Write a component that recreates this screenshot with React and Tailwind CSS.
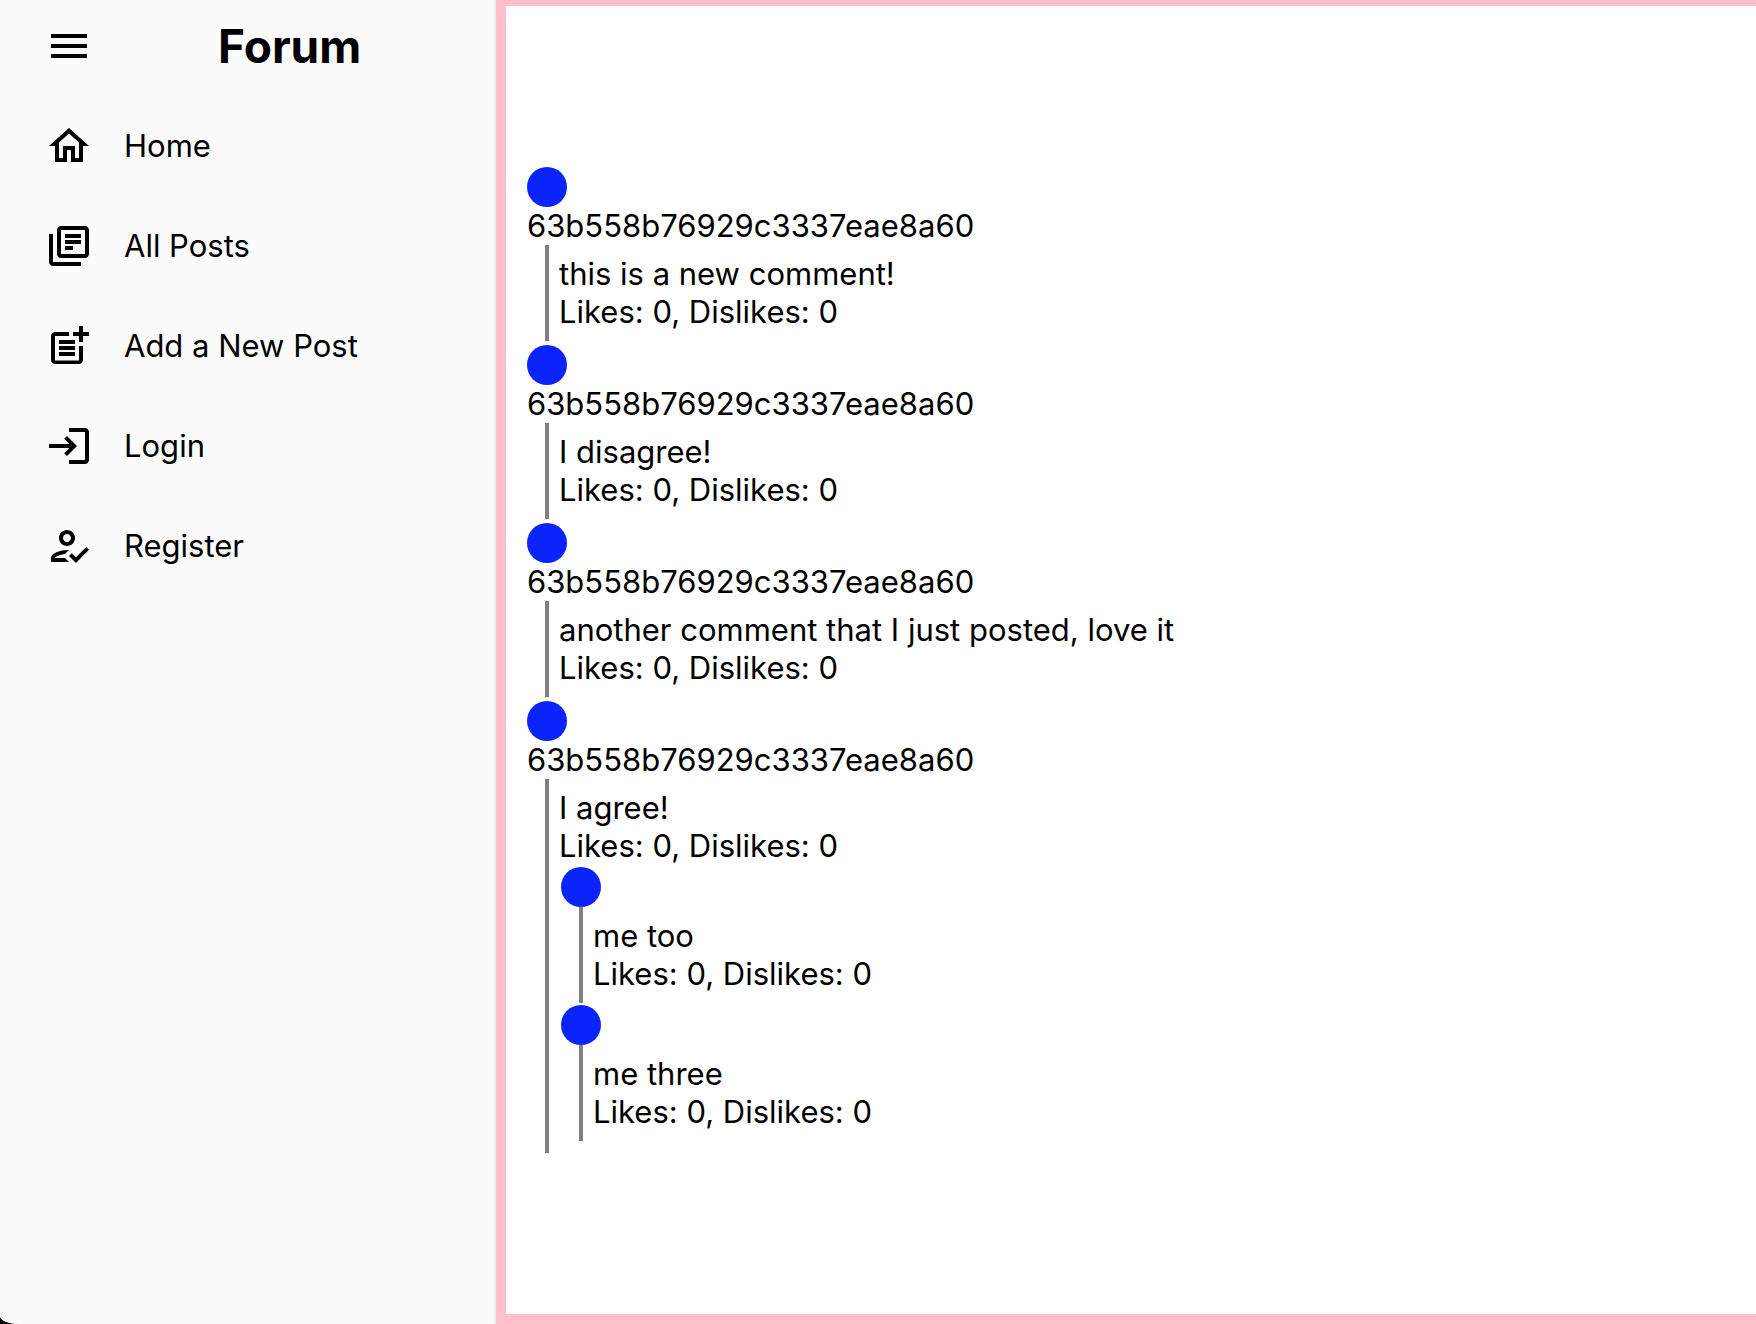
import React from "react";
import {
  MdMenu,
  MdOutlineHome,
  MdOutlineLibraryBooks,
  MdPostAdd,
  MdLogin,
  MdOutlineHowToReg,
} from "react-icons/md";

const links = [
  { label: "Home", Icon: MdOutlineHome },
  { label: "All Posts", Icon: MdOutlineLibraryBooks },
  { label: "Add a New Post", Icon: MdPostAdd },
  { label: "Login", Icon: MdLogin },
  { label: "Register", Icon: MdOutlineHowToReg },
];

const author = "63b558b76929c3337eae8a60";

const comments = [
  { author, text: "this is a new comment!" },
  { author, text: "I disagree!" },
  { author, text: "another comment that I just posted, love it" },
  { author, text: "I agree!", replies: [{ text: "me too" }, { text: "me three" }] },
];

function Comment({ comment }) {
  return (
    <li>
      <div className="size-10 rounded-full bg-[#0b24fb]" />
      {comment.author && <p>{comment.author}</p>}
      <div className="ml-[18px] border-l-4 border-[#808080] p-2.5">
        <p>{comment.text}</p>
        <p>Likes: 0, Dislikes: 0</p>
        {comment.replies && (
          <ul className="flex flex-col gap-0.5 p-0.5">
            {comment.replies.map((reply) => (
              <Comment key={reply.text} comment={reply} />
            ))}
          </ul>
        )}
      </div>
    </li>
  );
}

export default function App() {
  return (
    <div className="bg-black">
      <div className="flex min-h-screen overflow-hidden rounded-bl-[20px_8px] bg-white font-['Inter',sans-serif] text-[31px] leading-[38px] text-black">
        <aside className="w-[496px] shrink-0 border-r-2 border-[#eeeeee] bg-[#fbfbfb]">
          <header className="flex h-[92px] items-center pl-[45px]">
            <button type="button" aria-label="Toggle menu" className="shrink-0">
              <MdMenu className="size-12" />
            </button>
            <h1 className="ml-[125px] text-[46px] font-bold leading-[58px]">Forum</h1>
          </header>
          <nav className="pt-1">
            <ul>
              {links.map(({ label, Icon }) => (
                <li key={label}>
                  <a href="#" className="flex h-[100px] items-center gap-[31px] pl-[45px]">
                    <Icon className="size-12 shrink-0" />
                    {label}
                  </a>
                </li>
              ))}
            </ul>
          </nav>
        </aside>
        <main className="min-w-0 flex-1 border-l-10 border-t-6 border-b-10 border-[#ffc0cb] pl-[21px] pt-[161px]">
          <ul className="flex flex-col gap-1">
            {comments.map((comment) => (
              <Comment key={comment.text} comment={comment} />
            ))}
          </ul>
        </main>
      </div>
    </div>
  );
}
